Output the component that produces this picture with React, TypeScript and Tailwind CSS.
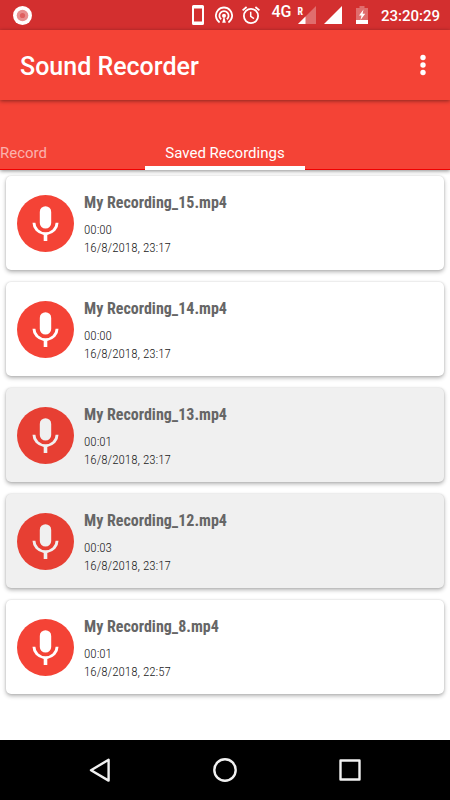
import React from "react";

type Recording = {
  name: string;
  length: string;
  date: string;
  pressed?: boolean;
};

const recordings: Recording[] = [
  { name: "My Recording_15.mp4", length: "00:00", date: "16/8/2018, 23:17" },
  { name: "My Recording_14.mp4", length: "00:00", date: "16/8/2018, 23:17" },
  { name: "My Recording_13.mp4", length: "00:01", date: "16/8/2018, 23:17", pressed: true },
  { name: "My Recording_12.mp4", length: "00:03", date: "16/8/2018, 23:17", pressed: true },
  { name: "My Recording_8.mp4", length: "00:01", date: "16/8/2018, 22:57" },
];

function StatusBar() {
  return (
    <div className="flex h-[30px] items-center bg-[#d32f2f] pr-[10px] pl-[13px] text-white">
      <svg className="size-[19px]" viewBox="0 0 19 19" aria-hidden="true">
        <circle cx="9.5" cy="9.5" r="9.5" fill="#fff" />
        <circle cx="9.5" cy="9.5" r="5.8" fill="#e88f8f" />
        <circle cx="9.5" cy="9.5" r="2.6" fill="#df6060" />
      </svg>
      <div className="ml-auto flex items-center">
        <svg className="h-5 w-[14px]" viewBox="0 0 14 20" aria-hidden="true">
          <path
            fill="#fff"
            fillRule="evenodd"
            d="M2.5 0h9A1.5 1.5 0 0 1 13 1.5v17a1.5 1.5 0 0 1-1.5 1.5h-9A1.5 1.5 0 0 1 1 18.5v-17A1.5 1.5 0 0 1 2.5 0ZM3 3.5v13h8v-13Z"
          />
        </svg>
        <svg className="ml-[10px] size-[18px]" viewBox="0 0 18 18" fill="none" stroke="#fff" strokeWidth="1.8" aria-hidden="true">
          <path d="M4.6 16.4A8.1 8.1 0 1 1 13.4 16.4" />
          <path d="M6.2 13.3A4.6 4.6 0 1 1 11.8 13.3" />
          <circle cx="9" cy="9.8" r="2" fill="#fff" stroke="none" />
          <path d="M9 10 7.2 16.8h3.6Z" fill="#fff" stroke="none" />
        </svg>
        <svg className="ml-[9px] size-[18px]" viewBox="0 0 18 18" fill="none" stroke="#fff" strokeWidth="1.8" aria-hidden="true">
          <circle cx="9" cy="10" r="7.1" />
          <path d="M.6 4.4 4.6 1M17.4 4.4 13.4 1" />
          <path d="M8.7 5.8v4.6l3.3 2.2" strokeWidth="1.5" />
        </svg>
        <span className="ml-[11px] flex h-5 items-start font-medium">
          <span className="text-base leading-[14px]">4G</span>
          <span className="ml-[6px] font-['Roboto_Condensed',Roboto,sans-serif] text-[10px] leading-[14px] font-bold">R</span>
        </span>
        <svg className="-ml-[5px] size-[18px]" viewBox="0 0 18 18" aria-hidden="true">
          <path d="M18 0v18H0Z" fill="#fff" fillOpacity=".3" />
          <path d="M7.5 10.5V18H0Z" fill="#fff" />
        </svg>
        <svg className="ml-[8px] size-[18px]" viewBox="0 0 18 18" aria-hidden="true">
          <path d="M18 0v18H0Z" fill="#fff" />
        </svg>
        <svg className="ml-[14px] h-[18px] w-3" viewBox="0 0 12 18" aria-hidden="true">
          <path d="M3.5 0h5v2H12v12H0V2h3.5Z" fill="#fff" fillOpacity=".3" />
          <path d="M0 14h12v4H0Z" fill="#fff" />
          <path d="M7.5 3.5 3 9.5h2.5L4.5 14l4.7-6.2H6.6Z" fill="#fff" />
        </svg>
        <time className="ml-[13px] pt-px text-[15px] leading-5 font-medium">23:20:29</time>
      </div>
    </div>
  );
}

function RecordingCard({ name, length, date, pressed }: Recording) {
  return (
    <li
      className={
        "flex h-[94px] items-center rounded-[5px] pl-[11px] shadow-[0_2px_4px_rgba(0,0,0,0.3),0_0_2px_rgba(0,0,0,0.14)] " +
        (pressed ? "bg-[#f0f0f0]" : "bg-white")
      }
    >
      <svg className="size-[57px] shrink-0" viewBox="0 0 57 57" aria-hidden="true">
        <circle cx="28.5" cy="28.5" r="28.5" fill={pressed ? "#e73f33" : "#f44336"} />
        <g fill={pressed ? "#f0f0f0" : "#fff"}>
          <rect x="22.8" y="11.2" width="11.4" height="22.4" rx="5.7" />
          <path d="M15.5 27.8h2.9a10.1 9.4 0 0 0 20.2 0h2.9a13 12.3 0 0 1-11.2 12.1V46h-3.6v-6.1a13 12.3 0 0 1-11.2-12.1Z" />
        </g>
      </svg>
      <div className="ml-[10px] pt-1 font-['Roboto_Condensed','Liberation_Sans_Narrow',Roboto,sans-serif] text-[13px] leading-[18px] font-light text-[#222]">
        <h2 className="mb-2 text-base leading-5 font-bold text-[#666]">{name}</h2>
        <p>{length}</p>
        <p>{date}</p>
      </div>
    </li>
  );
}

export default function App() {
  return (
    <div className="flex min-h-screen flex-col bg-white font-[Roboto,sans-serif]">
      <StatusBar />
      <header className="z-10 flex h-[70px] items-center bg-[#f44336] pr-[17px] pl-5 text-white shadow-[0_1px_4px_rgba(0,0,0,0.45)]">
        <h1 className="pt-[3px] text-[25px] leading-8 font-medium">Sound Recorder</h1>
        <button type="button" aria-label="More options" className="ml-auto flex h-8 w-5 items-center justify-center">
          <svg className="h-[22px] w-[6px]" viewBox="0 0 6 22" fill="#fff" aria-hidden="true">
            <circle cx="3" cy="3.5" r="2.7" />
            <circle cx="3" cy="11" r="2.7" />
            <circle cx="3" cy="18.5" r="2.7" />
          </svg>
        </button>
      </header>
      <nav className="z-[5] flex h-[70px] items-end border-b border-[#f00000] bg-[#f44336] text-[15px] leading-5 shadow-[0_1px_4px_rgba(0,0,0,0.45)]">
        <button type="button" className="w-[145px] pb-[6px] text-left text-white/60">
          Record
        </button>
        <button type="button" aria-current="page" className="-mb-px w-40 border-b-4 border-white pb-[3px] text-center whitespace-nowrap text-white">
          Saved Recordings
        </button>
      </nav>
      <main className="flex-1 px-[6px] pt-[6px] pb-3">
        <ul className="flex flex-col gap-3">
          {recordings.map((recording) => (
            <RecordingCard key={recording.name} {...recording} />
          ))}
        </ul>
      </main>
      <footer className="flex h-[60px] items-center justify-center gap-[93px] bg-black">
        <button type="button" aria-label="Back" className="size-8">
          <svg viewBox="0 0 32 32" fill="none" stroke="#f1f1f1" strokeWidth="2.4" strokeLinejoin="round" aria-hidden="true">
            <path d="M24.6 5.8v20.8L7 16.2Z" />
          </svg>
        </button>
        <button type="button" aria-label="Home" className="size-8">
          <svg viewBox="0 0 32 32" fill="none" stroke="#f1f1f1" strokeWidth="2.4" aria-hidden="true">
            <circle cx="16" cy="16" r="10.7" />
          </svg>
        </button>
        <button type="button" aria-label="Recent apps" className="size-8">
          <svg viewBox="0 0 32 32" fill="none" stroke="#f1f1f1" strokeWidth="2.4" strokeLinejoin="round" aria-hidden="true">
            <rect x="6.5" y="6.5" width="19" height="19" />
          </svg>
        </button>
      </footer>
    </div>
  );
}
